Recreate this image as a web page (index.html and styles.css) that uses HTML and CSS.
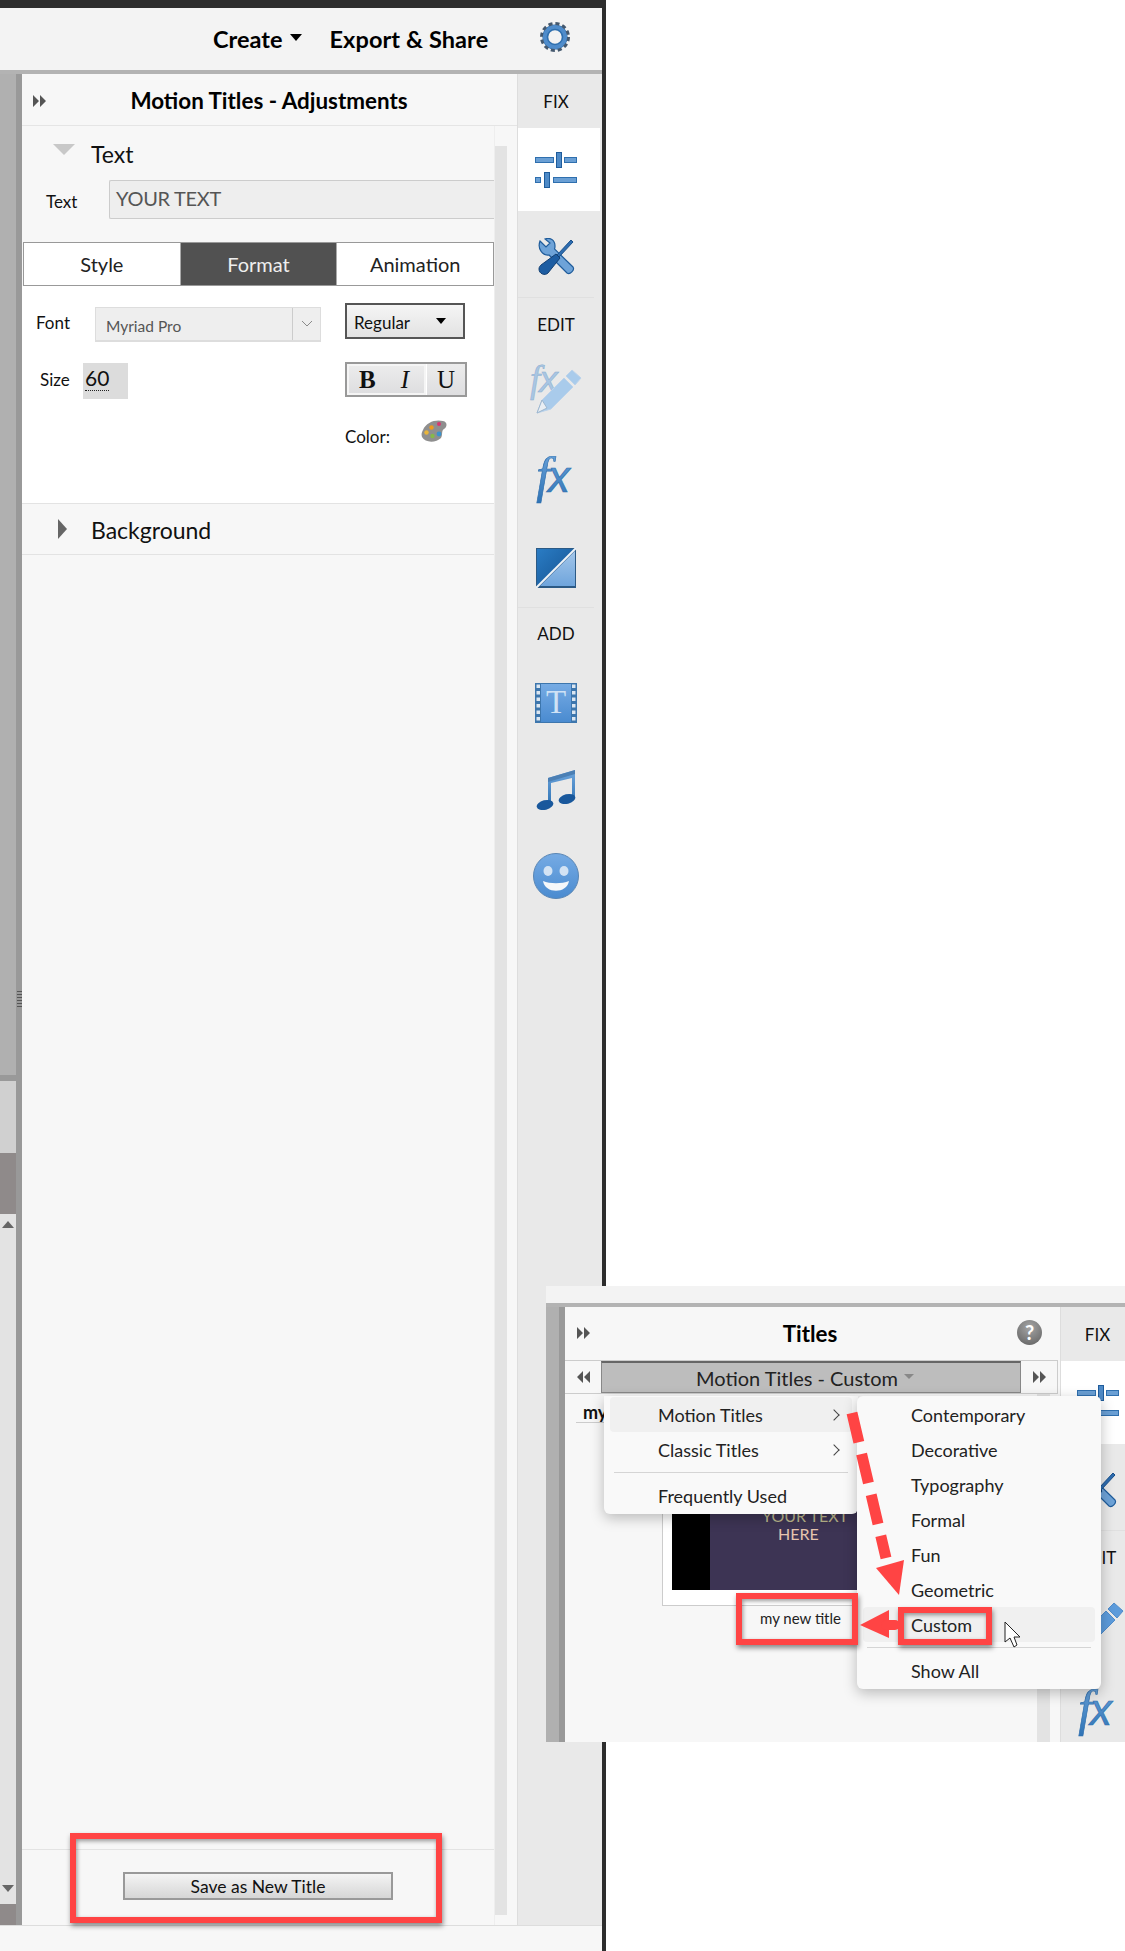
FILE: index.html
```html
<!DOCTYPE html>
<html lang="en">

<head>
  <meta charset="UTF-8">
  <title>Motion Titles</title>
  <link rel="stylesheet" href="styles.css">
</head>

<body>

  <svg class="defs" width="0" height="0">
    <defs>
      <linearGradient id="blue" x1="0" y1="0" x2="0" y2="1">
        <stop offset="0" stop-color="#6ea6dd" />
        <stop offset="1" stop-color="#2f73b5" />
      </linearGradient>
      <linearGradient id="face" x1="0" y1="0" x2="0" y2="1">
        <stop offset="0" stop-color="#76abe4" />
        <stop offset="1" stop-color="#4a8bd0" />
      </linearGradient>
      <linearGradient id="dark" x1="0" y1="0" x2="1" y2="1">
        <stop offset="0" stop-color="#2a7cc4" />
        <stop offset="1" stop-color="#14518f" />
      </linearGradient>
      <linearGradient id="light" x1="0" y1="0" x2="0" y2="1">
        <stop offset="0" stop-color="#a3c6ea" />
        <stop offset="1" stop-color="#6fa5dc" />
      </linearGradient>

      <symbol id="i-sliders" viewBox="0 0 42 36">
        <g fill="#6a9fd4" stroke="#2f6fae">
          <rect x="0.500" y="5.500" width="18" height="5" />
          <rect x="29.500" y="5.500" width="12" height="5" />
          <rect x="0.500" y="25.500" width="5" height="5" />
          <rect x="18.500" y="25.500" width="23" height="5" />
        </g>
        <g fill="#4e8ac7" stroke="#1f5c9b">
          <rect x="21.500" y="0.500" width="5" height="15" />
          <rect x="9.500" y="20.500" width="5" height="15" />
        </g>
      </symbol>

      <symbol id="i-tools" viewBox="0 0 38 38">
        <path d="M3 3 9 9 13 5 8 1C13-1 18 2 18 8 18 9 18 10 17.500 11L36 29C38 32 33 37 30 35L12 17C6 18 0 11 3 3Z" fill="#6ea3d8" stroke="#1f5c9b" stroke-width="1.200" />
        <path d="M34 2 36 4 22 19 20 17Z" fill="#2e6db0" stroke="#184f8a" />
        <path d="M19 16 23 20 11 35C8 38 2 36 2 31 2 29 3 28 4 27Z" fill="#1d5da2" stroke="#123f72" />
      </symbol>

      <symbol id="i-fxedit" viewBox="0 0 54 50">
        <text x="1" y="28" class="fx-glyph" font-size="37" fill="#a9c6e3" stroke="#8dafd0" stroke-width=".5">f<tspan class="x-glyph" dx="-1">x</tspan></text>
        <path d="M8 49 13 36 35 14 44 23 22 45Z" fill="#a9cbeb" stroke="#bcd3ea" />
        <path d="M8 49 13 36 18 44Z" fill="#e9eef3" stroke="#9db6ce" />
        <path d="M37 12 43 6 52 14 46 21Z" fill="#a9cbeb" stroke="#bcd3ea" />
      </symbol>

      <symbol id="i-pencil-on" viewBox="0 0 54 50">
        <path d="M8 49 13 36 35 14 44 23 22 45Z" fill="#5c9bdb" stroke="#4f8ccb" />
        <path d="M37 12 43 6 52 14 46 21Z" fill="#5c9bdb" stroke="#4f8ccb" />
      </symbol>

      <symbol id="i-fx" viewBox="0 0 42 44">
        <text x="3" y="33" class="fx-glyph" font-size="46" fill="url(#blue)" stroke="#2f6fae" stroke-width=".6">f<tspan class="x-glyph" dx="-2" font-size="40">x</tspan></text>
      </symbol>

      <symbol id="i-split" viewBox="0 0 40 40">
        <rect width="40" height="40" fill="#2c5a85" />
        <path d="M1 1H38L1 38Z" fill="url(#dark)" />
        <path d="M39 3V38H4Z" fill="url(#light)" />
        <path d="M40 0 0 40" stroke="#eef3f8" stroke-width="2" />
      </symbol>

      <symbol id="i-film" viewBox="0 0 42 40">
        <rect width="42" height="40" fill="#3d76ad" />
        <rect x="6" y="1" width="30" height="38" fill="url(#face)" />
        <g fill="#dbe6f1">
          <rect x="1.500" y="1.500" width="3.500" height="3.500" />
          <rect x="1.500" y="8" width="3.500" height="3.500" />
          <rect x="1.500" y="14.500" width="3.500" height="3.500" />
          <rect x="1.500" y="21" width="3.500" height="3.500" />
          <rect x="1.500" y="27.500" width="3.500" height="3.500" />
          <rect x="1.500" y="34" width="3.500" height="3.500" />
          <rect x="37" y="1.500" width="3.500" height="3.500" />
          <rect x="37" y="8" width="3.500" height="3.500" />
          <rect x="37" y="14.500" width="3.500" height="3.500" />
          <rect x="37" y="21" width="3.500" height="3.500" />
          <rect x="37" y="27.500" width="3.500" height="3.500" />
          <rect x="37" y="34" width="3.500" height="3.500" />
        </g>
        <text x="21" y="30" class="t-glyph" font-size="33" fill="#cfe2f5" text-anchor="middle">T</text>
      </symbol>

      <symbol id="i-music" viewBox="0 0 40 42">
        <path d="M12 9 39 1V30H36V9L15 14V36H12Z" fill="url(#blue)" />
        <path d="M12 9 39 1V5L12 13Z" fill="#4b7fb4" />
        <ellipse cx="9" cy="36" rx="8.500" ry="4.800" transform="rotate(-14 9 36)" fill="#19589c" />
        <ellipse cx="31" cy="30" rx="8.500" ry="4.800" transform="rotate(-14 31 30)" fill="#19589c" />
      </symbol>

      <symbol id="i-smile" viewBox="0 0 46 46">
        <circle cx="23" cy="23" r="22.500" fill="url(#face)" stroke="#5a86b4" />
        <ellipse cx="15" cy="18" rx="4.500" ry="5" fill="#d3e3f4" />
        <ellipse cx="31" cy="18" rx="4.500" ry="5" fill="#d3e3f4" />
        <path d="M10 28C17 31 29 31 36 28 34 41 12 41 10 28Z" fill="#f4f7fa" />
      </symbol>

      <symbol id="i-skip" viewBox="0 0 13 12">
        <path d="M0 0 6 6 0 12ZM7 0 13 6 7 12Z" fill="currentColor" />
      </symbol>
    </defs>
  </svg>

  <!-- main window -->
  <div class="app">
    <div class="topbar">
      <span class="top-link">Create</span>
      <span class="caret"></span>
      <span class="top-link export">Export &amp; Share</span>
      <svg class="gear" viewBox="0 0 28 28">
        <circle cx="14" cy="14" r="9" fill="none" stroke="#2f6fae" stroke-width="5.500" />
        <circle cx="14" cy="14" r="11.500" fill="none" stroke="#44586e" stroke-width="5" stroke-dasharray="3.500 2.520" />
        <circle cx="14" cy="14" r="9.500" fill="none" stroke="#4f8ccb" stroke-width="3.500" />
      </svg>
    </div>

    <div class="workspace">
      <div class="side">
        <div class="side-a"></div>
        <div class="side-band"></div>
        <div class="side-b"></div>
        <div class="side-c"></div>
        <div class="side-d">
          <span class="tri-up"></span>
          <span class="tri-down"></span>
        </div>
        <div class="side-c side-e"></div>
      </div>
      <div class="splitter"><span class="grip"></span></div>

      <div class="panel">
        <div class="panel-head">
          <svg class="skip"><use href="#i-skip" /></svg>
          <span class="panel-title">Motion Titles - Adjustments</span>
        </div>
        <div class="panel-main">
          <div class="panel-col">
            <div class="panel-scroll">
              <div class="section-head">
                <span class="tri-open"></span>
                <span class="section-name">Text</span>
              </div>
              <div class="text-row">
                <label class="text-label">Text</label>
                <div class="text-input">YOUR TEXT</div>
              </div>
              <div class="tabs">
                <div class="tab">Style</div>
                <div class="tab tab-on">Format</div>
                <div class="tab">Animation</div>
              </div>
              <div class="format">
                <div class="fmt-row row-font">
                  <div class="fmt-left">
                    <span class="fmt-label label-font">Font</span>
                    <div class="font-select">
                      <span class="font-name">Myriad Pro</span>
                      <span class="font-arrow">
                        <svg width="12" height="8" viewBox="0 0 12 8"><path d="M1 1 6 6 11 1" fill="none" stroke="#8a8a8a" /></svg>
                      </span>
                    </div>
                  </div>
                  <div class="style-select">
                    <span>Regular</span>
                    <span class="caret caret-sm"></span>
                  </div>
                </div>
                <div class="fmt-row row-size">
                  <div class="fmt-left">
                    <span class="fmt-label label-size">Size</span>
                    <div class="size-field"><span class="size-num">60</span></div>
                  </div>
                  <div class="biu">
                    <div class="biu-bi"><b>B</b><i>I</i></div>
                    <div class="biu-u">U</div>
                  </div>
                </div>
                <div class="fmt-row row-color">
                  <div class="fmt-left"></div>
                  <span class="color-label">Color:</span>
                  <svg class="palette" viewBox="0 0 26 22">
                    <path d="M2 10C5 2 15-1 22 1 27 2 26 7 23 9 20 11 22 15 20 18 15 23 4 23 1 17 0 14 1 12 2 10Z" fill="#8f8f8f" />
                    <circle cx="18" cy="4" r="2" fill="#d9376e" />
                    <circle cx="10.500" cy="7.500" r="2.200" fill="#ee9b1e" />
                    <circle cx="5.500" cy="12.500" r="2.200" fill="#e9b53a" />
                    <circle cx="11.500" cy="16" r="2.200" fill="#86b84a" />
                    <circle cx="18" cy="14" r="2.400" fill="#3b93cc" />
                  </svg>
                </div>
              </div>
              <div class="section-head section-closed">
                <span class="tri-closed"></span>
                <span class="section-name">Background</span>
              </div>
            </div>
            <div class="panel-foot">
              <div class="save-btn">Save as New Title</div>
            </div>
          </div>
          <div class="gutter"><div class="track"></div></div>
        </div>
      </div>

      <div class="rail">
        <div class="rail-label rail-fix">FIX</div>
        <div class="rail-on"><svg class="ic-sliders"><use href="#i-sliders" /></svg></div>
        <div class="rail-tool tool-wrench"><svg class="ic-tools"><use href="#i-tools" /></svg></div>
        <div class="rail-label rail-edit">EDIT</div>
        <div class="rail-tool tool-pencil"><svg class="ic-fxedit"><use href="#i-fxedit" /></svg></div>
        <div class="rail-tool tool-fx"><svg class="ic-fx"><use href="#i-fx" /></svg></div>
        <div class="rail-tool tool-split"><svg class="ic-split"><use href="#i-split" /></svg></div>
        <div class="rail-label rail-add">ADD</div>
        <div class="rail-tool tool-film"><svg class="ic-film"><use href="#i-film" /></svg></div>
        <div class="rail-tool tool-music"><svg class="ic-music"><use href="#i-music" /></svg></div>
        <div class="rail-tool tool-smile"><svg class="ic-smile"><use href="#i-smile" /></svg></div>
      </div>
    </div>

    <div class="statusbar"></div>
  </div>

  <!-- callout round the save button -->
  <div class="callout callout-save"></div>

  <!-- second screenshot pasted over the page -->
  <div class="inset">
    <div class="inset-top"></div>
    <div class="inset-body">
      <div class="inset-side"></div>
      <div class="inset-split"></div>
      <div class="inset-panel">
        <div class="inset-head">
          <svg class="skip inset-skip"><use href="#i-skip" /></svg>
          <span class="inset-title">Titles</span>
          <span class="help">?</span>
        </div>
        <div class="nav">
          <span class="nav-btn"><svg class="skip-sm flip"><use href="#i-skip" /></svg></span>
          <span class="nav-mid">Motion Titles - Custom<span class="caret caret-grey"></span></span>
          <span class="nav-btn"><svg class="skip-sm"><use href="#i-skip" /></svg></span>
        </div>
        <div class="inset-list">
          <div class="list-col">
            <div class="list-name">my</div>
            <div class="thumb">
              <div class="thumb-img">
                <div class="thumb-black"></div>
                <div class="thumb-purple">
                  <span class="thumb-y">YOUR TEXT</span>
                  <span class="thumb-h">HERE</span>
                </div>
              </div>
            </div>
            <div class="thumb-caption">my new title</div>
          </div>
          <div class="inset-track"></div>
        </div>
      </div>
      <div class="rail rail-inset">
        <div class="rail-label rail-fix">FIX</div>
        <div class="rail-on"><svg class="ic-sliders"><use href="#i-sliders" /></svg></div>
        <div class="rail-tool tool-wrench"><svg class="ic-tools"><use href="#i-tools" /></svg></div>
        <div class="rail-label rail-edit">EDIT</div>
        <div class="rail-tool tool-pencil"><svg class="ic-fxedit"><use href="#i-pencil-on" /></svg></div>
        <div class="rail-tool tool-fx"><svg class="ic-fx"><use href="#i-fx" /></svg></div>
      </div>
    </div>

    <div class="menu menu-left">
      <div class="menu-item menu-hover">Motion Titles<span class="chev"></span></div>
      <div class="menu-item">Classic Titles<span class="chev"></span></div>
      <div class="menu-sep"></div>
      <div class="menu-item">Frequently Used</div>
    </div>
    <div class="menu menu-right">
      <div class="menu-item">Contemporary</div>
      <div class="menu-item">Decorative</div>
      <div class="menu-item">Typography</div>
      <div class="menu-item">Formal</div>
      <div class="menu-item">Fun</div>
      <div class="menu-item">Geometric</div>
      <div class="menu-item menu-hover">Custom</div>
      <div class="menu-sep"></div>
      <div class="menu-item">Show All</div>
    </div>

    <div class="callout callout-name"></div>
    <div class="callout callout-custom"></div>

    <svg class="arrows" width="579" height="456" viewBox="0 0 579 456">
      <line x1="306" y1="127" x2="340" y2="272" stroke="#ff4444" stroke-width="11" stroke-dasharray="30 12" />
      <path d="M330 282 358 274 353 309Z" fill="#ff4444" />
      <path d="M314 339 343 324V352Z" fill="#ff4444" />
      <line x1="340" y1="339" x2="349" y2="339" stroke="#ff4444" stroke-width="10" stroke-linecap="round" />
      <path d="M459 336V356L464 352 468 361 471 359 468 351H474Z" fill="#fff" stroke="#222" />
    </svg>
  </div>

</body>

</html>
```

FILE: styles.css
```css
* {
  box-sizing: border-box;
}

body {
  margin: 0;
  width: 1125px;
  height: 1951px;
  overflow: hidden;
  position: relative;
  background-color: white;
  font-family: Lato, "Noto Sans", sans-serif;
  color: #111;
}

.defs {
  position: absolute;
}

.fx-glyph {
  font-family: "Liberation Serif", serif;
  font-style: italic;
}

.x-glyph {
  font-family: "Liberation Sans", sans-serif;
}

.t-glyph {
  font-family: "Liberation Serif", serif;
}

/* main window */

.app {
  width: 606px;
  height: 1951px;
  border-top: 8px solid #2d2d2d;
  border-right: 4px solid #2d2d2d;
  display: flex;
  flex-direction: column;
}

.topbar {
  height: 62px;
  flex: none;
  background-color: #f3f3f3;
  display: flex;
  align-items: center;
  padding-left: 213px;
}

.top-link {
  font-size: 23.500px;
  font-weight: bold;
  color: #000;
}

.export {
  margin-left: 27px;
  letter-spacing: .1px;
}

.caret {
  width: 0;
  height: 0;
  margin-left: 8px;
  margin-bottom: 4px;
  border-left: 6px solid transparent;
  border-right: 6px solid transparent;
  border-top: 7px solid #000;
}

.caret-sm {
  border-left-width: 5px;
  border-right-width: 5px;
  border-top-width: 6px;
  margin: 0 0 3px 0;
}

.caret-grey {
  display: inline-block;
  border-top-color: #888;
  border-left-width: 5px;
  border-right-width: 5px;
  border-top-width: 5px;
  margin: 0 0 3px 6px;
}

.gear {
  width: 30px;
  height: 30px;
  margin-left: 52px;
  margin-bottom: 4px;
}

.workspace {
  flex: 1;
  min-height: 0;
  display: flex;
  border-top: 4px solid #b3b3b3;
}

.side {
  width: 16px;
  flex: none;
  display: flex;
  flex-direction: column;
  background-color: #b0b0b0;
}

.side-a {
  height: 1001px;
}

.side-band {
  height: 6px;
  background-color: #999;
}

.side-b {
  height: 72px;
  background-color: #d0d0d0;
}

.side-c {
  height: 61px;
  background-color: #8f8a8a;
}

.side-d {
  height: 690px;
  background-color: #e3e3e3;
  display: flex;
  flex-direction: column;
  justify-content: space-between;
  align-items: center;
  padding: 7px 0 12px;
}

.side-e {
  height: 21px;
}

.tri-up {
  border-left: 6px solid transparent;
  border-right: 6px solid transparent;
  border-bottom: 7px solid #666;
}

.tri-down {
  border-left: 6px solid transparent;
  border-right: 6px solid transparent;
  border-top: 7px solid #666;
}

.splitter {
  width: 6px;
  flex: none;
  background-color: #999;
  padding-top: 917px;
}

.grip {
  display: block;
  width: 5px;
  height: 16px;
  margin-left: 1px;
  background: repeating-linear-gradient(#555 0 1px, transparent 1px 3px);
}

.panel {
  width: 495px;
  flex: none;
  display: flex;
  flex-direction: column;
  background-color: #f7f7f7;
}

.panel-head {
  height: 52px;
  flex: none;
  display: flex;
  align-items: center;
  justify-content: center;
  position: relative;
  border-bottom: 1px solid #e5e5e5;
  padding: 2px 1px 0 0;
}

.skip {
  position: absolute;
  left: 11px;
  top: 21px;
  width: 13px;
  height: 12px;
  color: #555;
}

.panel-title {
  font-size: 22.400px;
  font-weight: bold;
  color: #000;
}

.panel-main {
  flex: 1;
  min-height: 0;
  display: flex;
}

.panel-col {
  width: 472px;
  flex: none;
  display: flex;
  flex-direction: column;
}

.panel-scroll {
  flex: 1;
  min-height: 0;
}

.gutter {
  flex: 1;
  padding: 20px 10px 10px 0;
  border-left: 1px solid #eee;
}

.track {
  height: 100%;
  background-color: #e3e3e3;
}

.section-head {
  height: 54px;
  display: flex;
  align-items: center;
}

.tri-open {
  width: 0;
  height: 0;
  margin-left: 31px;
  margin-right: 16px;
  border-left: 11px solid transparent;
  border-right: 11px solid transparent;
  border-top: 11px solid #c8c8c8;
  margin-bottom: 8px;
}

.section-name {
  font-size: 23px;
  color: #111;
  margin-top: 2px;
}

.text-row {
  height: 62px;
  display: flex;
  padding-bottom: 24px;
  align-items: flex-start;
}

.text-label {
  width: 87px;
  padding: 11px 0 0 24px;
  font-size: 17px;
}

.text-input {
  flex: 1;
  height: 39px;
  padding: 5px 0 0 6px;
  background-color: #eee;
  border: 1px solid #ccc;
  border-right: none;
  border-radius: 2px 0 0 2px;
  font-size: 20px;
  letter-spacing: -.3px;
  color: #555;
}

.tabs {
  display: flex;
  height: 44px;
  margin-left: 1px;
  border: 1px solid #999;
  background-color: white;
}

.tab {
  flex: 1;
  display: flex;
  align-items: center;
  justify-content: center;
  font-size: 20px;
  color: #222;
}

.tab + .tab {
  border-left: 1px solid #aaa;
}

.tab-on {
  background-color: #515151;
  color: #eee;
}

.format {
  height: 218px;
  background-color: white;
  border-bottom: 1px solid #e3e3e3;
  padding-top: 17px;
  display: flex;
  flex-direction: column;
}

.fmt-row {
  display: flex;
}

.fmt-left {
  width: 323px;
  flex: none;
  display: flex;
}

.row-size {
  margin-top: 21px;
  height: 36px;
}

.row-color {
  margin-top: 21px;
}

.fmt-label {
  font-size: 17px;
}

.label-font {
  width: 73px;
  padding: 9px 0 0 14px;
}

.label-size {
  width: 61px;
  padding: 6px 0 0 18px;
}

.font-select {
  width: 226px;
  height: 35px;
  margin-top: 4px;
  display: flex;
  background-color: #eee;
  border: 1px solid #ddd;
  border-bottom-width: 2px;
  font-size: 15.500px;
  color: #555;
}

.font-name {
  flex: 1;
  padding: 9px 0 0 10px;
}

.font-arrow {
  width: 28px;
  border-left: 1px solid #ccc;
  display: flex;
  align-items: center;
  justify-content: center;
}

.style-select {
  width: 120px;
  height: 36px;
  display: flex;
  align-items: center;
  justify-content: space-between;
  padding: 2px 17px 0 7px;
  border: 2px solid #555;
  background: linear-gradient(#f5f5f5, #e2e2e2);
  font-size: 17px;
}

.size-field {
  width: 45px;
  height: 36px;
  padding: 2px 0 0 2px;
  background-color: #dcdcdc;
  font-size: 21px;
}

.size-num {
  border-bottom: 1px dotted #222;
}

.biu {
  width: 122px;
  height: 35px;
  margin-top: -1px;
  display: flex;
  border: 2px solid #999;
  font-family: "Liberation Serif", serif;
  font-size: 25px;
  color: #111;
}

.biu-bi {
  flex: 1;
  display: flex;
  justify-content: space-between;
  align-items: center;
  padding: 0 15px 0 10px;
  background: linear-gradient(#ececec, #dedee0);
  border: 2px solid #f5f5f5;
}

.biu-u {
  width: 39px;
  display: flex;
  align-items: center;
  justify-content: center;
  background: linear-gradient(#ececec, #dedee0);
  border-left: 1px solid #fff;
}

.color-label {
  font-size: 17px;
  margin-top: 6px;
  margin-right: 31px;
}

.palette {
  width: 26px;
  height: 22px;
  margin-top: 0;
}

.section-closed {
  height: 51px;
  border-bottom: 1px solid #e3e3e3;
}

.tri-closed {
  width: 0;
  height: 0;
  margin-left: 36px;
  margin-right: 24px;
  border-top: 10px solid transparent;
  border-bottom: 10px solid transparent;
  border-left: 9px solid #666;
}

.panel-foot {
  height: 76px;
  flex: none;
  border-top: 1px solid #e3e3e3;
  padding: 22px 0 0 101px;
}

.save-btn {
  width: 270px;
  height: 28px;
  display: flex;
  align-items: center;
  justify-content: center;
  padding-top: 1px;
  border: 2px solid #999;
  background: linear-gradient(#f4f4f4, #d6d6d6);
  font-size: 17.500px;
  color: #111;
}

.rail {
  flex: 1;
  display: flex;
  flex-direction: column;
  background-color: #e9e9e9;
  border-left: 1px solid #ddd;
  padding-right: 8px;
}

.rail-label {
  flex: none;
  display: flex;
  align-items: center;
  justify-content: center;
  font-size: 17px;
  color: #111;
}

.rail-fix {
  height: 54px;
}

.rail-edit {
  height: 52px;
}

.rail-add {
  height: 52px;
  border-top: 1px solid #e0e0e0;
}

.rail-on {
  height: 83px;
  flex: none;
  margin-right: -6px;
  background-color: white;
  display: flex;
  align-items: center;
  justify-content: center;
  padding-right: 6px;
}

.rail-tool {
  flex: none;
  display: flex;
  align-items: center;
  justify-content: center;
}

.tool-wrench {
  height: 87px;
  padding-top: 5px;
  border-bottom: 1px solid #e0e0e0;
}

.tool-pencil {
  height: 78px;
}

.tool-fx {
  height: 100px;
  padding-top: 3px;
}

.tool-split {
  height: 79px;
}

.tool-film {
  height: 88px;
}

.tool-music {
  height: 86px;
}

.tool-smile {
  height: 86px;
}

.ic-sliders {
  width: 42px;
  height: 36px;
}

.ic-tools {
  width: 38px;
  height: 38px;
}

.ic-fxedit {
  width: 54px;
  height: 50px;
}

.ic-fx {
  width: 46px;
  height: 48px;
}

.ic-split {
  width: 40px;
  height: 40px;
}

.ic-film {
  width: 42px;
  height: 40px;
}

.ic-music {
  width: 40px;
  height: 42px;
}

.ic-smile {
  width: 46px;
  height: 46px;
}

.statusbar {
  height: 26px;
  flex: none;
  background-color: #f7f7f7;
  border-top: 1px solid #ddd;
}

/* red callouts */

.callout {
  position: absolute;
  border: 6px solid #ff4444;
  box-shadow: 1px 3px 5px rgba(0, 0, 0, .45), inset 1px 2px 4px rgba(0, 0, 0, .4);
}

.callout-save {
  left: 70px;
  top: 1833px;
  width: 372px;
  height: 90px;
}

.callout-name {
  left: 190px;
  top: 307px;
  width: 122px;
  height: 52px;
}

.callout-custom {
  left: 352px;
  top: 321px;
  width: 94px;
  height: 38px;
}

/* second screenshot */

.inset {
  position: absolute;
  left: 546px;
  top: 1286px;
  width: 579px;
  height: 456px;
  overflow: hidden;
  background-color: #eee;
  display: flex;
  flex-direction: column;
}

.inset-top {
  height: 17px;
  flex: none;
  background-color: #f3f3f3;
  border-bottom: 0;
}

.inset-body {
  flex: 1;
  min-height: 0;
  display: flex;
  border-top: 4px solid #b3b3b3;
}

.inset-side {
  width: 13px;
  flex: none;
  background-color: #b0b0b0;
}

.inset-split {
  width: 6px;
  flex: none;
  background-color: #999;
}

.inset-panel {
  width: 495px;
  flex: none;
  display: flex;
  flex-direction: column;
  background-color: #f7f7f7;
}

.inset-head {
  height: 53px;
  flex: none;
  position: relative;
  display: flex;
  align-items: center;
  justify-content: center;
  padding-right: 5px;
}

.inset-skip {
  top: 20px;
  left: 12px;
}

.inset-title {
  font-size: 22.400px;
  font-weight: bold;
  color: #000;
}

.help {
  position: absolute;
  right: 18px;
  top: 13px;
  width: 25px;
  height: 25px;
  border-radius: 50%;
  background: radial-gradient(circle at 50% 30%, #a5a5a5, #5e5e5e);
  color: white;
  font-size: 20px;
  font-weight: bold;
  text-align: center;
  line-height: 25px;
}

.nav {
  height: 34px;
  flex: none;
  display: flex;
  margin-right: 2px;
  border: 1px solid #ccc;
  border-left: none;
  background-color: #f7f7f7;
}

.nav-btn {
  width: 36px;
  flex: none;
  display: flex;
  align-items: center;
  justify-content: center;
}

.skip-sm {
  width: 13px;
  height: 12px;
  color: #555;
}

.flip {
  transform: scaleX(-1);
}

.nav-mid {
  flex: 1;
  display: flex;
  align-items: center;
  justify-content: center;
  padding-right: 12px;
  background-color: #bdbdbd;
  border-top: 2px solid #666;
  border-left: 1px solid #888;
  border-right: 1px solid #888;
  border-bottom: 1px solid #888;
  font-size: 20px;
  color: #222;
}

.inset-list {
  flex: 1;
  display: flex;
  min-height: 0;
}

.list-col {
  width: 472px;
  flex: none;
  padding-left: 11px;
}

.list-name {
  height: 29px;
  padding: 7px 0 0 7px;
  border-bottom: 1px solid #ccc;
  font-size: 18px;
  font-weight: bold;
}

.thumb {
  width: 210px;
  height: 175px;
  margin: 8px 0 0 86px;
  padding: 9px 9px 15px;
  background-color: white;
  border-left: 1px solid #ccc;
  border-bottom: 1px solid #ccc;
  display: flex;
  align-items: flex-end;
}

.thumb-img {
  width: 100%;
  height: 100%;
  display: flex;
}

.thumb-black {
  width: 38px;
  background-color: #000;
}

.thumb-purple {
  flex: 1;
  background-color: #3d3454;
  display: flex;
  flex-direction: column;
  align-items: flex-start;
  padding: 67px 0 0 60px;
  font-size: 16px;
  line-height: 18px;
}

.thumb-y {
  color: #b9b68c;
  margin-left: -8px;
}

.thumb-h {
  color: #e6c4ae;
  margin-left: 8px;
}

.thumb-caption {
  margin: 3px 0 0 184px;
  font-size: 15px;
  color: #222;
}

.inset-track {
  width: 13px;
  flex: none;
  background-color: #e3e3e3;
}

.rail-inset {
  width: 82px;
  flex: none;
}

.menu {
  position: absolute;
  top: 110px;
  background-color: #f9f9f9;
  border-radius: 0 0 6px 6px;
  box-shadow: 0 4px 14px rgba(0, 0, 0, .25);
  padding: 1px 6px;
}

.menu-left {
  left: 58px;
  width: 254px;
  height: 118px;
}

.menu-right {
  left: 311px;
  width: 244px;
  height: 293px;
  border-radius: 6px;
}

.menu-item {
  height: 35px;
  display: flex;
  align-items: center;
  justify-content: space-between;
  padding: 0 14px 0 48px;
  font-size: 18px;
  color: #222;
  border-radius: 4px;
}

.menu-hover {
  background-color: #f0f0f0;
}

.chev {
  width: 8px;
  height: 8px;
  border-top: 1.500px solid #444;
  border-right: 1.500px solid #444;
  transform: rotate(45deg);
}

.menu-sep {
  height: 1px;
  margin: 5px 4px 5px;
  background-color: #d5d5d5;
}

.arrows {
  position: absolute;
  left: 0;
  top: 0;
}
```
